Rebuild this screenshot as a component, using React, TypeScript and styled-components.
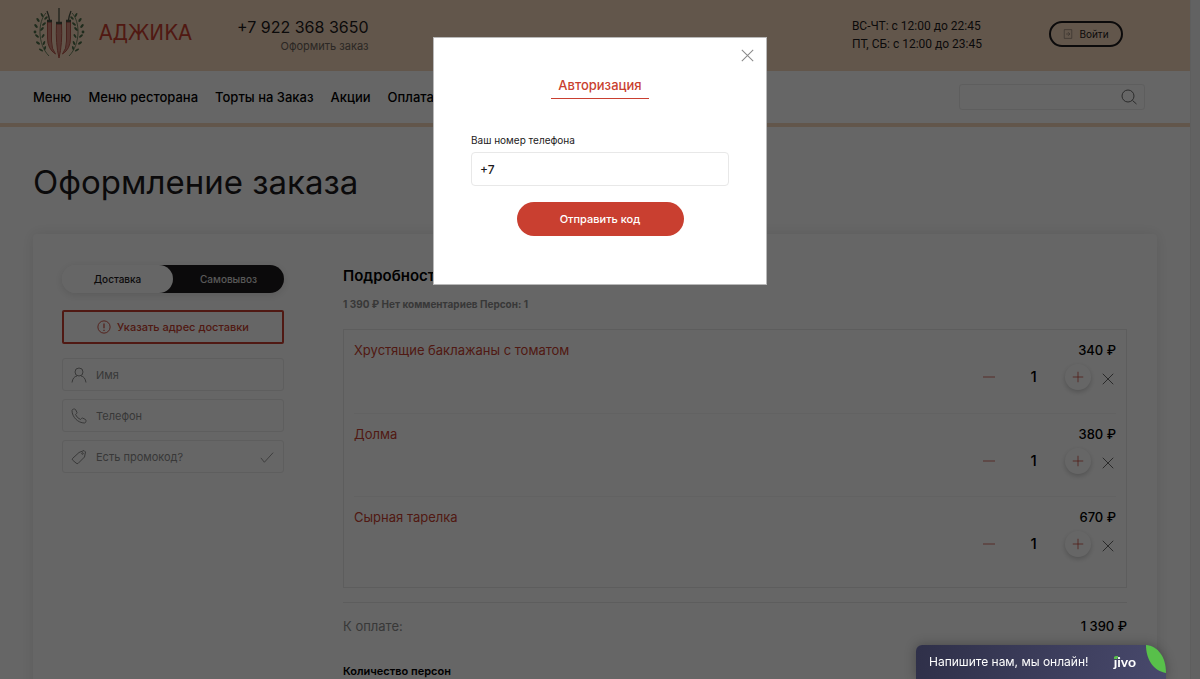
import React from "react";
import styled, { createGlobalStyle, css } from "styled-components";

const RED = "#c93f30";

const GlobalStyle = createGlobalStyle`
  *, *::before, *::after { box-sizing: border-box; }
  body {
    margin: 0;
    background: #fff;
    color: #1d1a1c;
    font-family: Inter, "Liberation Sans", sans-serif;
    font-size: 13px;
    line-height: 18px;
  }
  button, input { font: inherit; color: inherit; }
  button { cursor: pointer; padding: 0; border: 0; background: none; }
  a { color: inherit; text-decoration: none; }
  h1, h2, h3, p, ul { margin: 0; padding: 0; }
  svg { display: block; flex: none; }
`;

const Window = styled.div`
  display: flex;
  height: 100vh;
  overflow: hidden;
`;

const Page = styled.div`
  flex: 1;
  min-width: 0;
`;

const ScrollTrack = styled.div`
  width: 10px;
  background: #f4f4f4;
  border-left: 1px solid #ececec;
`;

const Header = styled.header`
  display: flex;
  align-items: flex-start;
  height: 71px;
  padding: 0 67px 0 33px;
  background: #f5d7bb;
`;

const Logo = styled.a`
  display: flex;
  align-items: center;
  gap: 14px;
  width: 204px;
  height: 66px;
`;

const LogoText = styled.span`
  color: ${RED};
  font-family: "DejaVu Sans Condensed", "DejaVu Sans", sans-serif;
  font-size: 22px;
  font-weight: 400;
  line-height: 32px;
`;

const Contacts = styled.div`
  display: flex;
  flex-direction: column;
  align-items: flex-end;
  padding-top: 17px;
`;

const Phone = styled.a`
  font-size: 16px;
  line-height: 20px;
`;

const CallNote = styled.span`
  color: #6b625a;
  font-size: 11px;
`;

const Hours = styled.p`
  margin-left: auto;
  padding-top: 17px;
  font-family: Roboto, "Liberation Sans", sans-serif;
  font-size: 12px;
`;

const LoginButton = styled.button`
  display: flex;
  align-items: center;
  justify-content: center;
  gap: 6px;
  width: 74px;
  height: 26px;
  margin: 21px 0 0 67px;
  border: 2px solid #1d1a1c;
  border-radius: 13px;
  font-size: 10px;
  svg { color: #7d7066; }
`;

const NavBar = styled.div`
  display: flex;
  align-items: center;
  justify-content: space-between;
  height: 56px;
  padding: 0 45px 0 33px;
  border-bottom: 4px solid #f5d7bb;
`;

const Nav = styled.nav`
  display: flex;
  gap: 17px;
  font-weight: 500;
  color: #000;
`;

const Search = styled.label`
  display: flex;
  align-items: center;
  width: 186px;
  height: 26px;
  padding-right: 7px;
  border: 1px solid #ececec;
  border-radius: 3px;
  color: #6a6a6a;
`;

const BareInput = styled.input`
  flex: 1;
  min-width: 0;
  padding: 0;
  border: 0;
  outline: 0;
  background: none;
  &::placeholder { color: #8d8d8d; opacity: 1; }
`;

const Main = styled.main`
  padding: 32px 33px 0;
`;

const Title = styled.h1`
  font-size: 33px;
  line-height: 46px;
  font-weight: 400;
`;

const Card = styled.section`
  display: grid;
  grid-template-columns: 222px 1fr;
  gap: 59px;
  margin-top: 29px;
  padding: 31px 30px 40px 29px;
  border-radius: 4px;
  background: #fff;
  box-shadow: 0 0 14px rgba(0, 0, 0, 0.1);
`;

const Form = styled.form`
  display: flex;
  flex-direction: column;
  gap: 8px;
`;

const Toggle = styled.div`
  display: flex;
  height: 28px;
  margin-bottom: 9px;
  border-radius: 14px;
  background: linear-gradient(90deg, #fff 40%, #1d1a1c 40%);
  box-shadow: 0 2px 8px rgba(0, 0, 0, 0.12);
`;

const ToggleOption = styled.button<{ $active?: boolean }>`
  flex: 1;
  border-radius: 14px;
  font-size: 10px;
  font-weight: 500;
  color: #ddd;
  ${(p) => p.$active && css`
    background: #fff;
    color: #1d1a1c;
  `}
`;

const AddressButton = styled.button`
  display: flex;
  align-items: center;
  justify-content: center;
  gap: 6px;
  height: 34px;
  margin-bottom: 6px;
  border: 2px solid ${RED};
  border-radius: 2px;
  color: ${RED};
  font-size: 11px;
  font-weight: 500;
`;

const Field = styled.label`
  display: flex;
  align-items: center;
  gap: 9px;
  height: 33px;
  padding: 0 9px 0 8px;
  border: 1px solid #ebebeb;
  border-radius: 3px;
  color: #8d8d8d;
  font-size: 11px;
`;

const DetailsTitle = styled.h2`
  color: #000;
  font-size: 15px;
  line-height: 22px;
  font-weight: 600;
`;

const Summary = styled.p`
  margin-top: 8px;
  color: #8d8d8d;
  font-size: 10px;
  font-weight: 700;
`;

const Items = styled.ul`
  margin-top: 16px;
  padding: 0 10px 8px;
  border: 1px solid #e9e9e9;
  list-style: none;
`;

const Item = styled.li`
  height: 83px;
  padding-top: 11px;
  & + & { border-top: 1px solid #f4f4f4; }
`;

const Line = styled.div`
  display: flex;
  justify-content: space-between;
`;

const DishLink = styled.a`
  color: ${RED};
`;

const Price = styled.span`
  color: #000;
  font-weight: 500;
`;

const Controls = styled.div`
  display: flex;
  align-items: center;
  justify-content: flex-end;
  height: 36px;
`;

const RoundButton = styled.button<{ $raised?: boolean }>`
  display: grid;
  place-items: center;
  width: 26px;
  height: 26px;
  border-radius: 50%;
  color: ${RED};
  ${(p) => p.$raised && css`
    box-shadow: 0 2px 5px rgba(0, 0, 0, 0.2);
  `}
`;

const Quantity = styled.span`
  width: 63px;
  color: #000;
  font-size: 15px;
  font-weight: 500;
  text-align: center;
`;

const RemoveButton = styled.button`
  display: grid;
  place-items: end center;
  width: 16px;
  height: 16px;
  margin-left: 9px;
  color: #666;
`;

const Total = styled.div`
  display: flex;
  justify-content: space-between;
  margin-top: 14px;
  padding-top: 14px;
  border-top: 1px solid #e9e9e9;
  color: #8d8d8d;
`;

const PersonsTitle = styled.h3`
  margin-top: 29px;
  color: #000;
  font-size: 11px;
  line-height: 14px;
  font-weight: 600;
`;

const Overlay = styled.div`
  position: fixed;
  inset: 0;
  display: flex;
  align-items: flex-start;
  justify-content: center;
  padding-top: 37px;
  background: rgba(0, 0, 0, 0.6);
`;

const Modal = styled.form`
  position: relative;
  display: flex;
  flex-direction: column;
  align-items: center;
  width: 334px;
  padding: 38px 37px 48px;
  border: 1px solid #b9b9b9;
  background: #fff;
`;

const CloseButton = styled.button`
  position: absolute;
  top: 11px;
  right: 12px;
  color: #8a8a8a;
`;

const ModalTitle = styled.h2`
  width: 98px;
  padding-bottom: 4px;
  border-bottom: 1px solid ${RED};
  color: ${RED};
  font-size: 13px;
  font-weight: 500;
  text-align: center;
`;

const PhoneLabel = styled.label`
  display: flex;
  flex-direction: column;
  gap: 3px;
  width: 100%;
  margin-top: 32px;
  font-size: 10px;
`;

const PhoneInput = styled.input`
  width: 100%;
  height: 34px;
  padding: 0 8px;
  border: 1px solid #e8e8e8;
  border-radius: 4px;
  outline: 0;
  font-size: 12px;
  font-weight: 500;
`;

const SubmitButton = styled.button`
  width: 167px;
  height: 34px;
  margin-top: 16px;
  border-radius: 17px;
  background: ${RED};
  color: #fff;
  font-size: 11px;
  font-weight: 500;
`;

const Chat = styled.button`
  position: fixed;
  right: 34px;
  bottom: 0;
  display: flex;
  align-items: center;
  width: 250px;
  height: 34px;
  padding-left: 13px;
  border-radius: 6px 20px 0 0 / 6px 28px 0 0;
  background: linear-gradient(100deg, #2f3049, #48496c);
  box-shadow: 0 0 12px rgba(0, 0, 0, 0.3);
  color: #fff;
  font-size: 12px;
`;

const ChatBrand = styled.span`
  position: relative;
  margin-left: auto;
  font-family: Lato, sans-serif;
  font-size: 14px;
  font-weight: 700;
  &::before {
    content: "";
    position: absolute;
    top: 3px;
    left: 0;
    width: 4px;
    height: 3px;
    border-radius: 2px 0 2px 0;
    background: #58c04a;
  }
`;

const Leaf = styled.svg`
  align-self: flex-start;
  margin-left: 10px;
`;

type IconProps = { size?: number; children: React.ReactNode };

const Icon = ({ size = 16, children }: IconProps) => (
  <svg width={size} height={size} viewBox="0 0 16 16" fill="none" stroke="currentColor" strokeWidth="1" aria-hidden="true">
    {children}
  </svg>
);

const Cross = ({ size = 12 }: { size?: number }) => (
  <Icon size={size}><path d="M1 1l14 14M15 1L1 15" strokeWidth="1.3" /></Icon>
);

const Branch = () => (
  <g>
    <path d="M13 6C5 14 4 37 16 49" fill="none" stroke="#4f6e4a" strokeWidth="0.8" />
    <g fill="#4f6e4a">
      <ellipse cx="9" cy="8" rx="1" ry="2.2" transform="rotate(-30 9 8)" />
      <ellipse cx="13" cy="11" rx="1" ry="2.2" transform="rotate(45 13 11)" />
      <ellipse cx="5" cy="13" rx="1.1" ry="2.3" transform="rotate(-35 5 13)" />
      <ellipse cx="11" cy="17" rx="1.1" ry="2.3" transform="rotate(50 11 17)" />
      <ellipse cx="3" cy="19" rx="1.2" ry="2.3" transform="rotate(-40 3 19)" />
      <ellipse cx="9" cy="22" rx="1.1" ry="2.3" transform="rotate(45 9 22)" />
      <circle cx="2" cy="25" r="1.4" />
      <ellipse cx="4" cy="29" rx="1.1" ry="2.3" transform="rotate(-50 4 29)" />
      <ellipse cx="10" cy="29" rx="1" ry="2.2" transform="rotate(35 10 29)" />
      <ellipse cx="5" cy="36" rx="1.1" ry="2.3" transform="rotate(-55 5 36)" />
      <ellipse cx="11" cy="36" rx="1" ry="2.1" transform="rotate(25 11 36)" />
      <ellipse cx="8" cy="43" rx="1" ry="2.3" transform="rotate(-60 8 43)" />
      <ellipse cx="12" cy="41" rx="1" ry="2" transform="rotate(15 12 41)" />
    </g>
  </g>
);

const Emblem = () => (
  <svg width="52" height="52" viewBox="0 0 52 52" aria-hidden="true">
    <Branch />
    <g transform="translate(52 0) scale(-1 1)"><Branch /></g>
    <g fill="#d28b7b" stroke="#b5564a" strokeWidth="1">
      <path d="M14.500 15h4v19q0 8 4 13q-8-5-8-16z" />
      <path d="M37.500 15h-4v19q0 8-4 13q8-5 8-16z" />
      <path d="M23.500 17h5q1 20-2.500 34q-3.500-14-2.500-34z" />
    </g>
    <g fill="none" stroke="#4a5243" strokeWidth="1.300">
      <path d="M14 4q2 5 2.500 9M38 4q-2 5-2.500 9M26 1v14" />
      <path d="M14 14h5M33 14h5M23 16h6" strokeWidth="2.500" />
    </g>
  </svg>
);

const dishes = [
  { name: "Хрустящие баклажаны с томатом", price: "340 ₽" },
  { name: "Долма", price: "380 ₽" },
  { name: "Сырная тарелка", price: "670 ₽" },
];

const links = ["Меню", "Меню ресторана", "Торты на Заказ", "Акции", "Оплата"];

export default function App() {
  return (
    <>
      <GlobalStyle />
      <Window>
        <Page>
          <Header>
            <Logo href="#">
              <Emblem />
              <LogoText>АДЖИКА</LogoText>
            </Logo>
            <Contacts>
              <Phone href="tel:+79223683650">+7 922 368 3650</Phone>
              <CallNote>Оформить заказ</CallNote>
            </Contacts>
            <Hours>
              ВС-ЧТ: с 12:00 до 22:45
              <br />
              ПТ, СБ: с 12:00 до 23:45
            </Hours>
            <LoginButton type="button">
              <Icon size={10}><path d="M2 1h12v14H2zM5 8h6M8 5l3 3-3 3" /></Icon>
              Войти
            </LoginButton>
          </Header>

          <NavBar>
            <Nav>
              {links.map((link) => <a key={link} href="#">{link}</a>)}
            </Nav>
            <Search>
              <BareInput type="search" aria-label="Поиск" />
              <Icon><circle cx="7" cy="7" r="6" /><path d="M11.500 11.500L15.500 15" /></Icon>
            </Search>
          </NavBar>

          <Main>
            <Title>Оформление заказа</Title>
            <Card>
              <Form>
                <Toggle>
                  <ToggleOption type="button" $active>Доставка</ToggleOption>
                  <ToggleOption type="button">Самовывоз</ToggleOption>
                </Toggle>
                <AddressButton type="button">
                  <Icon size={14}><circle cx="8" cy="8" r="7" /><path d="M8 4v5.500M8 11v1.500" strokeWidth="1.300" /></Icon>
                  Указать адрес доставки
                </AddressButton>
                <Field>
                  <Icon><circle cx="8" cy="5" r="4" /><path d="M1 15.500q1-6 5-6.500M15 15.500q-1-6-5-6.500" /></Icon>
                  <BareInput placeholder="Имя" aria-label="Имя" />
                </Field>
                <Field>
                  <Icon><path d="M1 2.500C1 1 4 .5 4.500 1.500L6 4.500Q6 5.500 4.500 6.500Q6 10 9.500 11.500Q10.500 10 11.500 10L14.500 11.500C15.500 12 15 15 13.500 15C7 15 1 9 1 2.500z" /></Icon>
                  <BareInput placeholder="Телефон" aria-label="Телефон" />
                </Field>
                <Field>
                  <Icon><path d="M8 3.500L13 1.500L14.500 3L13.500 8L7 14.500Q6 15 5 14L1.500 11Q1 10 1.500 9.500z" /><circle cx="11.500" cy="4.500" r="0.800" /></Icon>
                  <BareInput placeholder="Есть промокод?" aria-label="Промокод" />
                  <Icon size={14}><path d="M1 9l4 5L15 3" /></Icon>
                </Field>
              </Form>

              <div>
                <DetailsTitle>Подробности</DetailsTitle>
                <Summary>1 390 ₽ Нет комментариев Персон: 1</Summary>
                <Items>
                  {dishes.map((dish) => (
                    <Item key={dish.name}>
                      <Line>
                        <DishLink href="#">{dish.name}</DishLink>
                        <Price>{dish.price}</Price>
                      </Line>
                      <Controls>
                        <RoundButton type="button" aria-label="Меньше"><Icon size={12}><path d="M0 8h16" /></Icon></RoundButton>
                        <Quantity>1</Quantity>
                        <RoundButton type="button" aria-label="Больше" $raised><Icon size={12}><path d="M1 8h14M8 1v14" /></Icon></RoundButton>
                        <RemoveButton type="button" aria-label="Удалить"><Cross /></RemoveButton>
                      </Controls>
                    </Item>
                  ))}
                </Items>
                <Total>
                  <span>К оплате:</span>
                  <Price>1 390 ₽</Price>
                </Total>
                <PersonsTitle>Количество персон</PersonsTitle>
              </div>
            </Card>
          </Main>
        </Page>
        <ScrollTrack />
      </Window>

      <Overlay>
        <Modal role="dialog" aria-modal="true" aria-labelledby="auth-title">
          <CloseButton type="button" aria-label="Закрыть"><Cross size={13} /></CloseButton>
          <ModalTitle id="auth-title">Авторизация</ModalTitle>
          <PhoneLabel>
            Ваш номер телефона
            <PhoneInput type="tel" defaultValue="+7" />
          </PhoneLabel>
          <SubmitButton type="button">Отправить код</SubmitButton>
        </Modal>
      </Overlay>

      <Chat type="button">
        Напишите нам, мы онлайн!
        <ChatBrand>jivo</ChatBrand>
        <Leaf width="20" height="28" viewBox="0 0 20 28" aria-hidden="true">
          <path d="M0 0C12 1 20 12 20 28C8 26 0 15 0 0z" fill="#58c04a" />
        </Leaf>
      </Chat>
    </>
  );
}
